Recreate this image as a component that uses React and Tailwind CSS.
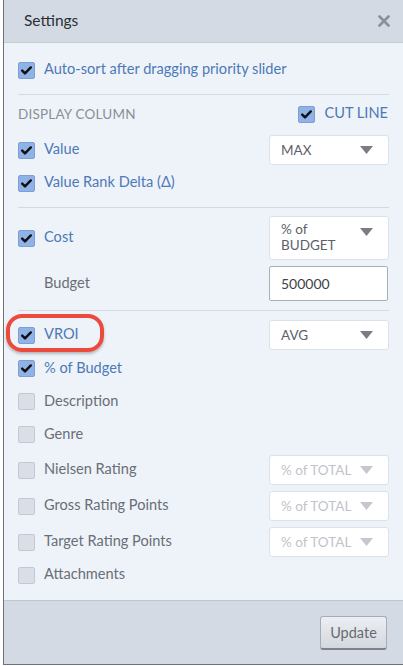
import React, { useState } from "react";

const font = { fontFamily: "Lato, 'Open Sans', sans-serif" };

const CheckBox = ({ checked, onClick }) => (
  <button
    type="button"
    onClick={onClick}
    className={`w-[17px] h-[17px] shrink-0 rounded-[2px] flex items-center justify-center ${
      checked ? "bg-[#8fb2e8] border border-[#7f9fd4]" : "bg-[#d9dee7] border border-[#c3c9d2]"
    }`}
  >
    {checked && (
      <svg width="11" height="9" viewBox="0 0 11 9">
        <path d="M1.2 4.6 L4 7.4 L9.8 1.4" fill="none" stroke="#111" strokeWidth="2.4" strokeLinecap="round" strokeLinejoin="round" />
      </svg>
    )}
  </button>
);

const Caret = ({ light }) => (
  <svg width="13" height="8" viewBox="0 0 13 8" className="shrink-0">
    <path d="M0 0 H13 L6.5 8 Z" fill={light ? "#c4c8ce" : "#7a7e84"} />
  </svg>
);

const Select = ({ children, light, tall }) => (
  <div
    className={`w-[120px] bg-white border border-[#dde2ea] rounded-[3px] flex justify-between pl-[11px] pr-[15px] text-[13.5px] ${
      tall ? "h-[44px] items-start pt-[4px] leading-[16px]" : "h-[30px] items-center"
    } ${light ? "text-[#c0c4ca]" : "text-[#5d6167]"}`}
  >
    <span>{children}</span>
    <span className={tall ? "pt-[7px]" : ""}>
      <Caret light={light} />
    </span>
  </div>
);

const Row = ({ checked, label, h, className = "", right, onToggle }) => (
  <div className={`flex items-center justify-between ${h} ${className}`}>
    <div className="flex items-center gap-[9px]">
      <CheckBox checked={checked} onClick={onToggle} />
      <span className={`text-[14.6px] leading-[18px] pb-[2px] ${checked ? "text-[#4d79b6]" : "text-[#6a6e75]"}`}>{label}</span>
    </div>
    {right}
  </div>
);

const Divider = ({ className = "" }) => <div className={`h-px bg-[#d3d9e1] ${className}`} />;

const App = () => {
  const [checks, setChecks] = useState({
    autosort: true,
    cutline: true,
    value: true,
    delta: true,
    cost: true,
    vroi: true,
    pct: true,
    desc: false,
    genre: false,
    nielsen: false,
    grp: false,
    trp: false,
    attach: false,
  });
  const t = (k) => () => setChecks({ ...checks, [k]: !checks[k] });

  return (
    <div className="w-[403px] h-[666px] bg-white" style={font}>
      <div className="ml-[3px] h-[665px] border-l border-b border-[#6e7278] flex flex-col bg-[#eef3fa]">
        <div className="h-[43px] shrink-0 bg-[#d4dae4] border-b border-[#c5ccd6] flex items-center justify-between pl-[20px] pr-[13px]">
          <span className="text-[15.5px] text-[#2c2f33]">Settings</span>
          <svg width="12" height="12" viewBox="0 0 12 12">
            <path d="M1.5 1.5 L10.5 10.5 M10.5 1.5 L1.5 10.5" stroke="#8b9097" strokeWidth="2.6" strokeLinecap="round" />
          </svg>
        </div>

        <div className="flex-1 px-[14px] relative">
          <Row checked={checks.autosort} onToggle={t("autosort")} label="Auto-sort after dragging priority slider" h="h-[26px]" className="mt-[14px]" />
          <Divider className="mt-[11px]" />
          <div className="h-[38px] flex items-center justify-between">
            <span className="text-[13.5px] text-[#8a8e95] tracking-[0.2px]">DISPLAY COLUMN</span>
            <div className="flex items-center gap-[9px] pr-[1px]">
              <CheckBox checked={checks.cutline} onClick={t("cutline")} />
              <span className="text-[14.6px] leading-[18px] pb-[2px] text-[#4d79b6]">CUT LINE</span>
            </div>
          </div>
          <Row checked={checks.value} onToggle={t("value")} label="Value" h="h-[34px]" right={<Select>MAX</Select>} />
          <Row checked={checks.delta} onToggle={t("delta")} label="Value Rank Delta (Δ)" h="h-[32px]" />
          <Divider className="mt-[8px]" />
          <Row checked={checks.cost} onToggle={t("cost")} label="Cost" h="h-[44px]" className="mt-[8px]" right={<Select tall>% of<br />BUDGET</Select>} />
          <div className="h-[35px] mt-[6px] flex items-center justify-between">
            <span className="text-[14.6px] leading-[18px] pb-[2px] text-[#6a6e75] pl-[26px]">Budget</span>
            <div className="w-[119px] h-[35px] bg-white border border-[#a9afb7] rounded-[2px] flex items-center pl-[11px] text-[14px] text-[#3f4247] mr-[1px]">
              500000
            </div>
          </div>
          <Divider className="mt-[9px]" />
          <div className="relative mt-[9px]">
            <Row checked={checks.vroi} onToggle={t("vroi")} label="VROI" h="h-[30px]" right={<Select>AVG</Select>} />
            <div className="absolute left-[-12px] top-[-6px] w-[98px] h-[38px] rounded-[16px] border-[4px] border-[#ec4a3c] shadow-[0_2px_3px_rgba(0,0,0,0.25)] pointer-events-none" />
          </div>
          <Row checked={checks.pct} onToggle={t("pct")} label="% of Budget" h="h-[33px]" className="mt-[2px]" />
          <Row checked={checks.desc} onToggle={t("desc")} label="Description" h="h-[33px]" />
          <Row checked={checks.genre} onToggle={t("genre")} label="Genre" h="h-[33px]" />
          <Row checked={checks.nielsen} onToggle={t("nielsen")} label="Nielsen Rating" h="h-[30px]" className="mt-[4px]" right={<Select light>% of TOTAL</Select>} />
          <Row checked={checks.grp} onToggle={t("grp")} label="Gross Rating Points" h="h-[30px]" className="mt-[6px]" right={<Select light>% of TOTAL</Select>} />
          <Row checked={checks.trp} onToggle={t("trp")} label="Target Rating Points" h="h-[30px]" className="mt-[6px]" right={<Select light>% of TOTAL</Select>} />
          <Row checked={checks.attach} onToggle={t("attach")} label="Attachments" h="h-[36px]" />
        </div>

        <div className="h-[64px] shrink-0 bg-[#d4dae4] border-t border-[#bfc6d0] flex items-start justify-end pr-[16px] pt-[15px]">
          <button className="w-[67px] h-[34px] rounded-[3px] border border-[#a8adb4] border-b-[2px] border-b-[#7e838a] bg-gradient-to-b from-[#eceff3] to-[#d3d8df] text-[14.5px] text-[#676b71]">
            Update
          </button>
        </div>
      </div>
    </div>
  );
};

export default App;
